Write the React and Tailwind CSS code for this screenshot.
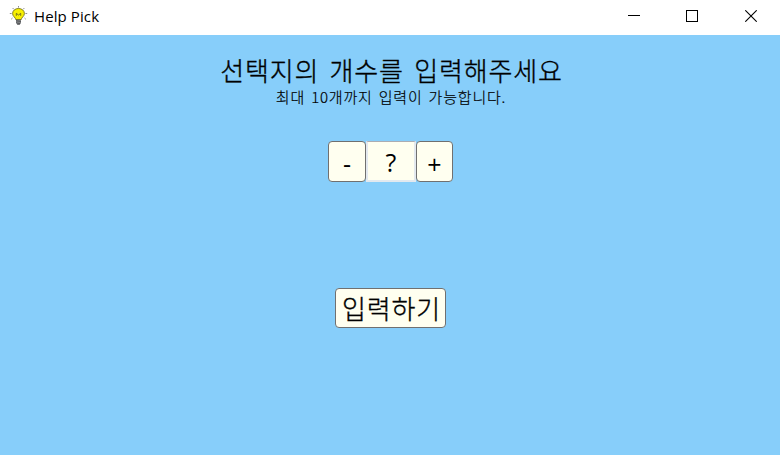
function BulbIcon() {
  return (
    <svg width="20" height="20" viewBox="0 0 20 20" fill="none" className="shrink-0">
      <g stroke="#8f8f8f" strokeWidth="1">
        <path d="M9.5 0v1.6M3.6 2l1.3 1.3M15.4 2l-1.3 1.3M0.8 7.5h1.8M16.4 7.5h1.8M2.2 13.2l1.3-1.2M16.8 13.2l-1.3-1.2" />
      </g>
      <path d="M9.5 2.5c-3.4 0-5.900 2.200-5.900 5 0 2.900 2.900 3.800 3.400 6.400h5c.5-2.600 3.400-3.500 3.400-6.400 0-2.800-2.500-5-5.900-5Z" fill="#f8f000" stroke="#77741c" strokeWidth="0.9" />
      <path d="M7.300 9.800V7.300l2.200 1.700 2.200-1.700v2.500" stroke="#66641c" strokeWidth="0.9" />
      <path d="M7 13.500h5v3.300l-1.300 2H8.300L7 16.800Z" fill="#4b4d50" />
      <path d="M7 15.200l5-.5M7.200 17l4.600-.5" stroke="#b8babc" strokeWidth="0.6" />
    </svg>
  );
}

function TitleBar() {
  return (
    <header className="flex h-[35px] shrink-0 items-start bg-white">
      <div className="flex grow pl-[9px] pt-[6px]">
        <BulbIcon />
        <span className="ml-[5px] font-['Open_Sans',sans-serif] text-[15px] leading-5 tracking-[0.1px]">Help Pick</span>
      </div>
      <div className="flex h-8 text-black">
        <div className="flex w-[58px] items-center justify-center">
          <svg width="12" height="12" shapeRendering="crispEdges"><path d="M0 5.5h12" stroke="currentColor" /></svg>
        </div>
        <div className="flex w-[58px] items-center justify-center">
          <svg width="12" height="12" shapeRendering="crispEdges"><rect x=".5" y=".5" width="11" height="11" fill="none" stroke="currentColor" /></svg>
        </div>
        <div className="flex w-[59px] items-center justify-center">
          <svg width="12" height="12"><path d="M.3.3l11.400 11.400M11.700.3L.3 11.700" stroke="currentColor" strokeWidth="1.1" /></svg>
        </div>
      </div>
    </header>
  );
}

export default function App() {
  return (
    <div className="flex h-screen flex-col overflow-hidden bg-[#87cefa] font-['Open_Sans','Noto_Sans_CJK_KR',sans-serif] text-black">
      <TitleBar />
      <main className="flex grow flex-col items-center pl-px">
        <h1 className="mt-[18px] h-[34px] whitespace-nowrap pl-[2px] font-['Noto_Sans_CJK_KR',sans-serif] text-[26px] font-light leading-[34px] tracking-[0.85px] [word-spacing:3.700px] [-webkit-text-stroke:0.35px_black]">선택지의 개수를 입력해주세요</h1>
        <p className="h-5 whitespace-nowrap pl-px font-['Noto_Sans_CJK_KR',sans-serif] text-[15px] font-light leading-5 tracking-[0.8px] [word-spacing:2px] [-webkit-text-stroke:0.2px_black]">최대 10개까지 입력이 가능합니다.</p>
        <div className="mt-[34px] flex h-[41px] w-[125px]">
          <button className="flex w-[38px] items-center justify-center rounded-[4px] border border-[#707070] bg-[#fffff0] pt-[3px] text-[25px] leading-none">-</button>
          <div className="flex w-[50px] items-center justify-center border-2 border-t border-[#e3e9ef] border-t-[#abadb3] bg-[#fffff0] pt-[3px] text-[25px] leading-none">?</div>
          <button className="flex w-[37px] items-center justify-center rounded-[4px] border border-[#707070] bg-[#fffff0] pt-[5px] text-[25px] leading-none">+</button>
        </div>
        <button className="mt-[106px] flex h-10 w-[111px] items-center justify-center whitespace-nowrap rounded-[4px] border border-[#707070] bg-[#fffff0] pl-[2px] font-['Noto_Sans_CJK_KR',sans-serif] text-[26px] font-light leading-none tracking-[0.85px] [-webkit-text-stroke:0.35px_black]">입력하기</button>
      </main>
    </div>
  );
}
